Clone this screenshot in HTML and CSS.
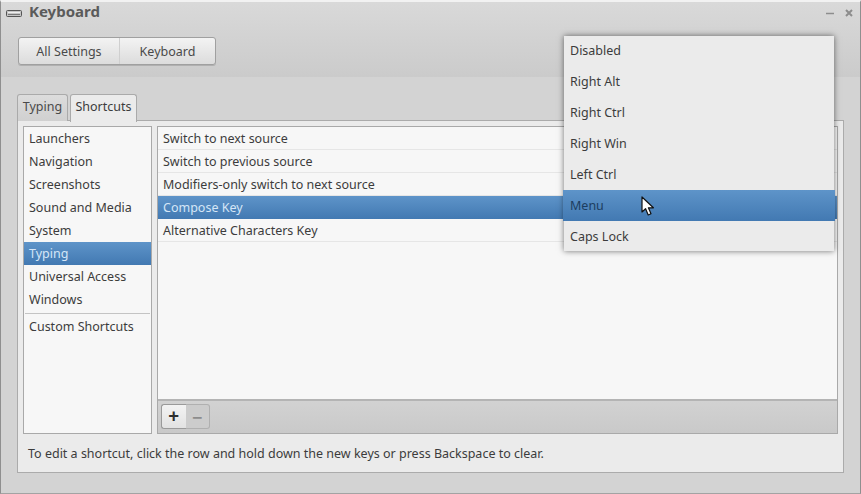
FILE: index.html
```html
<!DOCTYPE html>
<html>
<head>
  <meta charset="UTF-8">
  <title>Keyboard</title>
  <link rel="stylesheet" href="styles.css">
</head>
<body>

  <div class="window">

    <!-- Title and path bar -->
    <div class="header">
      <div class="titlebar">
        <svg class="title-icon" width="16" height="7" viewBox="0 0 16 7">
          <rect x="0.5" y="0.5" width="15" height="6" rx="1" fill="#c4c4c4" stroke="#555"/>
          <path d="M2 2.5h12" stroke="#eee" stroke-width="1"/>
          <path d="M2 4.5h12" stroke="#777" stroke-width="1"/>
        </svg>
        <span class="title">Keyboard</span>
        <div class="window-buttons">
          <svg width="10" height="10" viewBox="0 0 10 10"><path d="M1 5.5h8" stroke="#8d8d8d" stroke-width="1.5"/></svg>
          <svg width="10" height="10" viewBox="0 0 10 10"><path d="M2 2l6 6M8 2l-6 6" stroke="#8d8d8d" stroke-width="2"/></svg>
        </div>
      </div>
      <div class="pathbar">
        <button class="path-btn">All Settings</button>
        <button class="path-btn">Keyboard</button>
      </div>
    </div>

    <div class="content">
      <div class="tabs">
        <div class="tab">Typing</div>
        <div class="tab active">Shortcuts</div>
      </div>

      <div class="panel">
        <div class="panes">
          <ul class="sidebar">
            <li>Launchers</li>
            <li>Navigation</li>
            <li>Screenshots</li>
            <li>Sound and Media</li>
            <li>System</li>
            <li class="selected">Typing</li>
            <li>Universal Access</li>
            <li>Windows</li>
            <li class="separator"></li>
            <li>Custom Shortcuts</li>
          </ul>

          <div class="shortcuts">
            <ul class="shortcut-list">
              <li>Switch to next source</li>
              <li>Switch to previous source</li>
              <li>Modifiers-only switch to next source</li>
              <li class="selected">Compose Key</li>
              <li>Alternative Characters Key</li>
            </ul>
            <div class="list-toolbar">
              <div class="add-remove">
                <button class="tool-btn add">+</button>
                <button class="tool-btn remove">−</button>
              </div>
            </div>
          </div>
        </div>
        <p class="hint">To edit a shortcut, click the row and hold down the new keys or press Backspace to clear.</p>
      </div>
    </div>

    <!-- Compose key popup -->
    <ul class="popup-menu">
      <li>Disabled</li>
      <li>Right Alt</li>
      <li>Right Ctrl</li>
      <li>Right Win</li>
      <li>Left Ctrl</li>
      <li class="selected">Menu</li>
      <li>Caps Lock</li>
    </ul>

    <svg class="cursor" width="14" height="21" viewBox="0 0 14 21">
      <path d="M1 1v15l3.6-3.3 2.6 6.3 2.8-1.2-2.6-6h5z" fill="#fff" stroke="#111" stroke-width="1.2" stroke-linejoin="round"/>
    </svg>
  </div>

</body>
</html>
```

FILE: styles.css
```css
body {
  margin: 0;
  background-color: #d3d3d3;
  font-family: "Noto Sans", "Open Sans", sans-serif;
  font-size: 12.5px;
  color: #3c3c3c;
}

ul {
  list-style: none;
  margin: 0;
  padding: 0;
}

.window {
  position: relative;
  width: 861px;
  height: 494px;
  box-sizing: border-box;
  overflow: hidden;
  border: 1px solid #8f8f8f;
  border-top: 2px solid #f2f2f2;
  border-bottom-color: #a3a3a3;
  background-color: #d3d3d3;
}

.header {
  height: 75px;
  background: linear-gradient(#d9d9d9, #cbcbcb);
}

.titlebar {
  display: flex;
  align-items: center;
  height: 18px;
  padding: 0 5px;
}

.title-icon {
  margin-right: 7px;
  margin-top: 5px;
}

.title {
  font-size: 15px;
  font-weight: bold;
  color: #5b5b5b;
  flex: 1;
}

.window-buttons {
  display: flex;
  gap: 9px;
  margin: 3px 1px 0 0;
}

.pathbar {
  display: flex;
  margin: 17px 0 0 17px;
  width: 198px;
  height: 28px;
  border: 1px solid #a0a0a0;
  border-radius: 3px;
  background: linear-gradient(#f3f3f3, #dcdcdc);
  box-sizing: border-box;
  box-shadow: 0 1px 0 #b0b0b0;
}

.path-btn {
  border: none;
  background: none;
  font-family: inherit;
  font-size: 12.5px;
  color: #4a4a4a;
  padding: 0;
}

.path-btn:first-child {
  width: 101px;
  border-right: 1px solid #cfcfcf;
}

.path-btn:last-child {
  flex: 1;
}

.content {
  padding: 17px 16px 0 16px;
}

.tabs {
  display: flex;
  gap: 2px;
  height: 27px;
  margin-bottom: -1px;
  position: relative;
}

.tab {
  box-sizing: border-box;
  width: 51px;
  padding-top: 3px;
  text-align: center;
  color: #4a4a4a;
  border: 1px solid #aaa;
  border-bottom: none;
  border-radius: 3px 3px 0 0;
  background: linear-gradient(#dcdcdc, #d0d0d0);
}

.tab.active {
  width: 67px;
  height: 28px;
  background: #ebebeb;
  color: #3c3c3c;
}

.panel {
  box-sizing: border-box;
  height: 353px;
  padding: 5px;
  background-color: #ebebeb;
  border: 1px solid #ababab;
}

.panes {
  display: flex;
  gap: 5px;
  height: 308px;
}

.sidebar {
  box-sizing: border-box;
  width: 129px;
  background-color: #f7f7f7;
  border: 1px solid #a9a9a9;
}

.sidebar li,
.shortcut-list li {
  height: 23px;
  line-height: 24px;
  padding-left: 5px;
  box-sizing: border-box;
}

.sidebar .separator {
  height: 1px;
  margin: 2px 1px 1px;
  padding: 0;
  background-color: #c4c4c4;
}

.sidebar .selected,
.shortcut-list .selected {
  background: linear-gradient(#5e94c9, #4279b2);
  color: #d5e6f7;
}

.shortcuts {
  display: flex;
  flex-direction: column;
  flex: 1;
  box-sizing: border-box;
  border: 1px solid #a9a9a9;
}

.shortcut-list {
  flex: 1;
  background-color: #f7f7f7;
}

.shortcut-list li {
  border-bottom: 1px solid #e6e6e6;
}

.shortcut-list .selected {
  border-bottom: none;
}

.list-toolbar {
  height: 34px;
  box-sizing: border-box;
  padding: 3px 0 0 3px;
  border-top: 2px solid #b4b4b4;
  background: linear-gradient(#d2d2d2, #c9c9c9);
}

.add-remove {
  display: flex;
  width: 49px;
  height: 25px;
}

.tool-btn {
  width: 25px;
  padding: 0;
  border: 1px solid #b0b0b0;
  font-family: inherit;
  line-height: 1;
}

.tool-btn.add {
  background: linear-gradient(#f3f3f3, #e2e2e2);
  border-color: #9a9a9a;
  border-right: none;
  border-radius: 3px 0 0 3px;
  font-size: 19px;
  font-weight: bold;
  color: #2e2e2e;
}

.tool-btn.remove {
  background: #cccccc;
  border-left: none;
  border-radius: 0 3px 3px 0;
  font-size: 18px;
  font-weight: bold;
  color: #8c8c8c;
}

.hint {
  margin: 11px 0 0;
  padding-left: 5px;
  line-height: 18px;
  color: #3c3c3c;
}

.popup-menu {
  position: absolute;
  left: 563px;
  top: 34px;
  width: 270px;
  background-color: #ebebeb;
  box-shadow: 0 0 6px rgba(0, 0, 0, 0.55);
}

.popup-menu li {
  height: 31px;
  line-height: 32px;
  padding-left: 6px;
  color: #3c3c3c;
}

.popup-menu li:first-child {
  height: 30px;
  line-height: 30px;
}

.popup-menu li:last-child {
  height: 30px;
}

.popup-menu .selected {
  margin: 0 -1px;
  padding-left: 7px;
  background: linear-gradient(#5e94c9, #4279b2);
  color: #1c3d60;
}

.cursor {
  position: absolute;
  left: 640px;
  top: 194px;
}
```
